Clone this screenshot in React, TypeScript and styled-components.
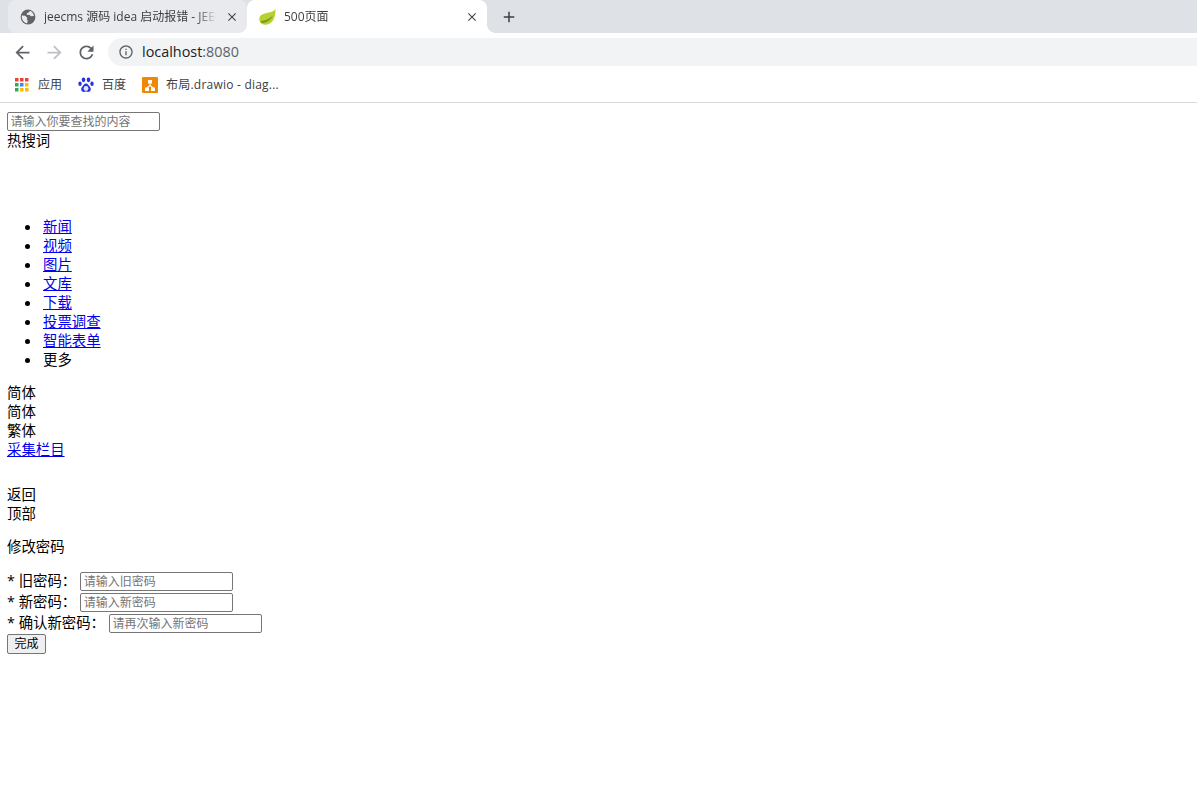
import styled, { createGlobalStyle } from "styled-components";

const GlobalStyle = createGlobalStyle`
  html, body {
    margin: 0;
    padding: 0;
    background: #fff;
  }
  body {
    font-family: "Open Sans", "Noto Sans CJK SC", sans-serif;
    font-size: 14.4px;
    line-height: 17px;
    color: #000;
  }
`;

const TabStrip = styled.div`
  height: 33px;
  background: #dee1e6;
  display: flex;
  padding-left: 8px;
`;

const Tab = styled.div`
  width: 239px;
  padding: 0 8px 0 12px;
  display: flex;
  align-items: center;
  gap: 8px;
  box-sizing: border-box;
  border-radius: 8px;
  background: #e8eaed;
  font-size: 12px;
  color: #3c4043;
  white-space: nowrap;
`;

const ActiveTab = styled(Tab)`
  position: relative;
  width: 240px;
  border-radius: 8px 8px 0 0;
  background: #fff;

  &::before,
  &::after {
    content: "";
    position: absolute;
    bottom: 0;
    width: 8px;
    height: 8px;
  }
  &::before {
    left: -8px;
    background: radial-gradient(circle at 0 0, transparent 7.5px, #fff 8px);
  }
  &::after {
    right: -8px;
    background: radial-gradient(circle at 100% 0, transparent 7.5px, #fff 8px);
  }
`;

const TabTitle = styled.span`
  flex: 1;
  overflow: hidden;
  white-space: nowrap;
  -webkit-mask-image: linear-gradient(90deg, #000 88%, transparent);
  mask-image: linear-gradient(90deg, #000 88%, transparent);
`;

const NewTab = styled.span`
  display: flex;
  align-items: center;
  margin-left: 13px;
`;

const Toolbar = styled.div`
  height: 33px;
  padding: 5px 0 0 12px;
  display: flex;
  align-items: center;
  box-sizing: border-box;
  background: #fff;
`;

const NavButton = styled.span`
  display: flex;
  width: 21px;
  margin-right: 11px;
`;

const Omnibox = styled.div`
  flex: 1;
  height: 28px;
  padding-left: 10px;
  display: flex;
  align-items: center;
  gap: 8px;
  background: #f1f3f4;
  border-radius: 14px 0 0 14px;
  font-size: 14.4px;
  color: #202124;
`;

const Address = styled.span`
  padding-bottom: 1px;
`;

const Port = styled.span`
  color: #5f6368;
`;

const Bookmarks = styled.div`
  height: 37px;
  padding: 1px 0 0 15px;
  display: flex;
  align-items: center;
  box-sizing: border-box;
  border-bottom: 1px solid #d7d8da;
  font-size: 12px;
  color: #3c4043;
`;

const Bookmark = styled.span<{ $gap: number; $inner: number }>`
  display: flex;
  align-items: center;
  gap: ${(p) => p.$inner}px;
  margin-right: ${(p) => p.$gap}px;
`;

const WideLabel = styled.span`
  letter-spacing: 0.22px;
`;

const Page = styled.main`
  padding: 9px 7px 0;
`;

const Field = styled.input<{ $lead?: number }>`
  display: inline-block;
  vertical-align: top;
  box-sizing: border-box;
  width: 153px;
  height: 19px;
  margin: 0 0 0 ${(p) => p.$lead ?? 0}px;
  padding: 0 2.5px;
  border: 1px solid #767676;
  border-radius: 2px;
  background: #fff;
  font-family: inherit;
  font-size: 12px;
  line-height: 17px;

  &::placeholder {
    color: #757575;
    opacity: 1;
  }
`;

const Line = styled.div<{ $top?: number }>`
  height: 19px;
  margin-top: ${(p) => p.$top ?? 0}px;
  white-space: nowrap;
`;

const NavList = styled.ul`
  margin: 67px 0 0;
  padding: 0 0 0 36px;
  list-style: none;
`;

const Item = styled.li`
  position: relative;
  height: 19px;

  &::before {
    content: "";
    position: absolute;
    left: -18px;
    top: 6.5px;
    width: 5px;
    height: 5px;
    border-radius: 50%;
    background: #000;
  }
`;

const Anchor = styled.a`
  color: #0000ee;
  text-decoration: underline;
`;

const FormList = styled.div`
  margin-top: 15px;
`;

const FormRow = styled.div`
  height: 21px;
  white-space: nowrap;

  &:last-child {
    height: 20px;
  }
`;

const DoneButton = styled.button`
  display: block;
  box-sizing: border-box;
  width: 39px;
  height: 20px;
  padding: 0;
  border: 1px solid #767676;
  border-radius: 2px;
  background: #efefef;
  font-family: inherit;
  font-size: 12px;
  line-height: 18px;
  color: #000;
`;

function MaterialIcon({ d, size, color }: { d: string; size: number; color: string }) {
  return (
    <svg width={size} height={size} viewBox="0 0 24 24" fill={color}>
      <path d={d} />
    </svg>
  );
}

const CLOSE =
  "M19 6.410L17.590 5 12 10.590 6.410 5 5 6.410 10.590 12 5 17.590 6.410 19 12 13.410 17.590 19 19 17.590 13.410 12z";
const PLUS = "M19 13h-6v6h-2v-6H5v-2h6V5h2v6h6v2z";
const BACK = "M20 11H7.830l5.590-5.590L12 4l-8 8 8 8 1.410-1.410L7.830 13H20v-2z";
const FORWARD = "M12 4l-1.410 1.410L16.170 11H4v2h12.170l-5.580 5.590L12 20l8-8z";
const RELOAD =
  "M17.650 6.350C16.200 4.900 14.210 4 12 4c-4.420 0-7.990 3.580-7.990 8s3.570 8 7.990 8c3.730 0 6.840-2.550 7.730-6h-2.080c-.82 2.330-3.040 4-5.650 4-3.310 0-6-2.690-6-6s2.690-6 6-6c1.660 0 3.140.69 4.220 1.780L13 11h7V4l-2.350 2.350z";
const INFO =
  "M11 7h2v2h-2zm0 4h2v6h-2zm1-9C6.480 2 2 6.480 2 12s4.480 10 10 10 10-4.480 10-10S17.520 2 12 2zm0 18c-4.410 0-8-3.590-8-8s3.590-8 8-8 8 3.590 8 8-3.590 8-8 8z";

function GlobeIcon() {
  return (
    <svg width="16" height="16" viewBox="0 0 16 16">
      <circle cx="8" cy="8" r="7.400" fill="#5f6368" />
      <path
        d="M1.800 6.500l3.400.2 2.200 2.200-.7 1.400 1 1.200-.4 2.600-1 .1C3.500 13 1.500 10.500 1.800 6.500zM9.800 1.800l-.7 1.500-2.300 1 .1 1.500 2.700.3 1.300 1.200 3.100-.3C13.500 4.500 12.200 2.500 9.800 1.800z"
        fill="#e8eaed"
      />
    </svg>
  );
}

function LeafIcon() {
  return (
    <svg width="17" height="16" viewBox="0 0 17 16">
      <path d="M16.500 0C16.500 7 15 14 8 15.500 3 16.500 .3 13.500 .3 10 .5 5 6 4.500 10 3.500 13 2.800 15 1.800 16.500 0z" fill="#b8d12f" />
      <path d="M1.500 12.500C5 11.500 10 10.500 14 6.500 12.500 11 7 14 3 14z" fill="#6f9a23" />
    </svg>
  );
}

function AppsIcon() {
  const colours = ["#ea4335", "#ea4335", "#ea4335", "#34a853", "#4285f4", "#fbbc05", "#34a853", "#fbbc05", "#fbbc05"];
  return (
    <svg width="14" height="14" viewBox="0 0 14 14">
      {colours.map((c, i) => (
        <rect key={i} x={(i % 3) * 5} y={Math.floor(i / 3) * 5} width="3.500" height="3.500" fill={c} />
      ))}
    </svg>
  );
}

function PawIcon() {
  return (
    <svg width="16" height="16" viewBox="0 0 16 16" fill="#2932e1">
      <ellipse cx="5.500" cy="2.800" rx="1.800" ry="2.400" />
      <ellipse cx="10.500" cy="2.800" rx="1.800" ry="2.400" />
      <ellipse cx="2" cy="6.800" rx="1.700" ry="2.200" />
      <ellipse cx="14" cy="6.800" rx="1.700" ry="2.200" />
      <path d="M8 6.500c-2 0-2.500 2-4 3.500-1.500 1.800-.8 5 2 5 1 0 1.300-.4 2-.4s1 .4 2 .4c2.800 0 3.500-3.200 2-5-1.500-1.500-2-3.500-4-3.500z" />
      <circle cx="8" cy="11.500" r="2.400" fill="#dfe3ff" />
    </svg>
  );
}

function DrawioIcon() {
  return (
    <svg width="16" height="16" viewBox="0 0 16 16">
      <rect width="16" height="16" rx="1" fill="#f08705" />
      <path d="M6 3h4v3.500H8.500v1.500l3 2.500H13V14H9v-3.200h.7L8 9 6.300 10.800H7V14H3v-3.500h1.500l3-2.500V6.500H6z" fill="#fff" />
    </svg>
  );
}

export default function App() {
  return (
    <>
      <GlobalStyle />
      <TabStrip>
        <Tab>
          <GlobeIcon />
          <TabTitle>jeecms 源码 idea 启动报错 - JEECMS</TabTitle>
          <MaterialIcon d={CLOSE} size={14} color="#45484c" />
        </Tab>
        <ActiveTab>
          <LeafIcon />
          <TabTitle>500页面</TabTitle>
          <MaterialIcon d={CLOSE} size={14} color="#45484c" />
        </ActiveTab>
        <NewTab>
          <MaterialIcon d={PLUS} size={18} color="#3c4043" />
        </NewTab>
      </TabStrip>
      <Toolbar>
        <NavButton>
          <MaterialIcon d={BACK} size={21} color="#5f6368" />
        </NavButton>
        <NavButton>
          <MaterialIcon d={FORWARD} size={21} color="#bdc1c6" />
        </NavButton>
        <NavButton>
          <MaterialIcon d={RELOAD} size={21} color="#5f6368" />
        </NavButton>
        <Omnibox>
          <MaterialIcon d={INFO} size={16} color="#5f6368" />
          <Address>
            localhost<Port>:8080</Port>
          </Address>
        </Omnibox>
      </Toolbar>
      <Bookmarks>
        <Bookmark $gap={16} $inner={9}>
          <AppsIcon />
          应用
        </Bookmark>
        <Bookmark $gap={16} $inner={8}>
          <PawIcon />
          百度
        </Bookmark>
        <Bookmark $gap={0} $inner={8}>
          <DrawioIcon />
          <WideLabel>布局.drawio - diag...</WideLabel>
        </Bookmark>
      </Bookmarks>
      <Page>
        <Field placeholder="请输入你要查找的内容" readOnly />
        <Line $top={1}>热搜词</Line>
        <NavList>
          <Item><Anchor href="#">新闻</Anchor></Item>
          <Item><Anchor href="#">视频</Anchor></Item>
          <Item><Anchor href="#">图片</Anchor></Item>
          <Item><Anchor href="#">文库</Anchor></Item>
          <Item><Anchor href="#">下载</Anchor></Item>
          <Item><Anchor href="#">投票调查</Anchor></Item>
          <Item><Anchor href="#">智能表单</Anchor></Item>
          <Item>更多</Item>
        </NavList>
        <Line $top={14}>简体</Line>
        <Line>简体</Line>
        <Line>繁体</Line>
        <Line><Anchor href="#">采集栏目</Anchor></Line>
        <Line $top={26}>返回</Line>
        <Line>顶部</Line>
        <Line $top={14}>修改密码</Line>
        <FormList>
          <FormRow>
            * 旧密码：<Field $lead={4} placeholder="请输入旧密码" readOnly />
          </FormRow>
          <FormRow>
            * 新密码：<Field $lead={4} placeholder="请输入新密码" readOnly />
          </FormRow>
          <FormRow>
            * 确认新密码：<Field $lead={4} placeholder="请再次输入新密码" readOnly />
          </FormRow>
        </FormList>
        <DoneButton>完成</DoneButton>
      </Page>
    </>
  );
}
